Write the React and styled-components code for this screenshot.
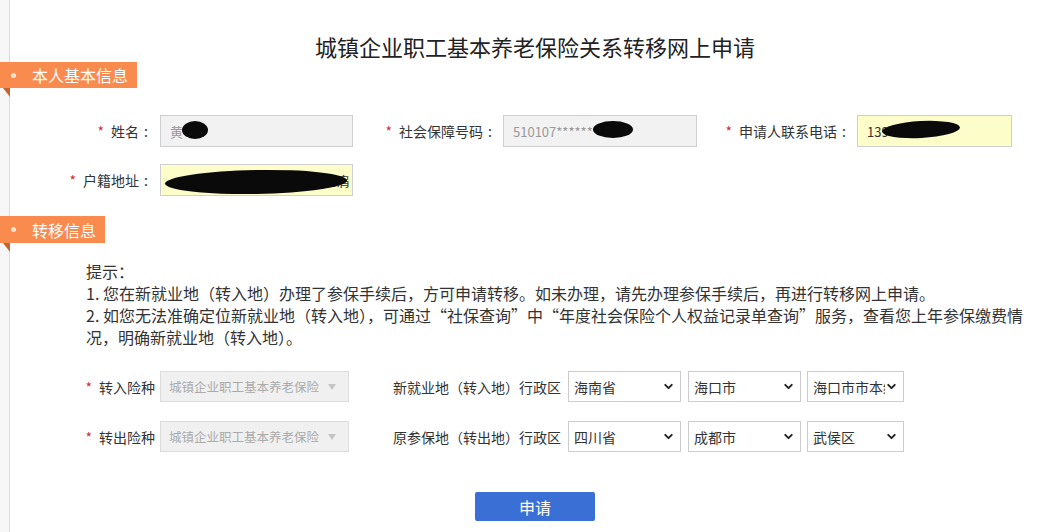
import React from 'react';
import styled, { createGlobalStyle } from 'styled-components';
import { ChevronDown } from 'lucide-react';

const Global = createGlobalStyle`
  html, body {
    margin: 0;
    padding: 0;
    background: #f7f7f7;
    font-family: "Microsoft YaHei", "Noto Sans CJK SC", "Noto Sans", sans-serif;
    color: #333;
  }
`;

const Page = styled.div`
  display: flow-root;
  margin-left: 9px;
  border-left: 1px solid #dadada;
  background: #fff;
  min-height: 532px;
`;

const Title = styled.h1`
  margin: 0;
  padding: 31px 0 0 7px;
  height: 30px;
  line-height: 30px;
  font-size: 22px;
  font-weight: normal;
  color: #222;
  text-align: center;
`;

const Tab = styled.div`
  position: relative;
  display: flex;
  align-items: center;
  width: fit-content;
  height: ${p => p.$h}px;
  margin: ${p => p.$top}px 0 0 -10px;
  padding: 0 9px 0 32px;
  background: #f98b4f;
  color: #fff;
  font-size: 16px;

  &::before {
    content: '';
    position: absolute;
    left: 11px;
    top: 50%;
    width: 5px;
    height: 5px;
    margin-top: -2.5px;
    border-radius: 50%;
    background: #fde4d3;
  }

  &::after {
    content: '';
    position: absolute;
    left: 3px;
    top: 100%;
    border-top: 9px solid #c4652f;
    border-left: 7px solid transparent;
  }
`;

const Row = styled.div`
  display: flex;
  align-items: center;
  height: ${p => p.$h}px;
  margin-top: ${p => p.$top}px;
`;

const Label = styled.div`
  flex: none;
  display: flex;
  align-items: center;
  justify-content: ${p => (p.$align === 'left' ? 'flex-start' : 'flex-end')};
  width: ${p => p.$w}px;
  margin-right: ${p => p.$gap}px;
  margin-left: ${p => p.$left || 0}px;
  font-size: 14px;
  color: #333;
  white-space: nowrap;
`;

const Star = styled.span`
  color: #c8323a;
  margin-right: 7px;
`;

const Colon = styled.span`
  display: inline-block;
  width: 14px;
  text-align: center;
`;

const Input = styled.div`
  position: relative;
  box-sizing: border-box;
  flex: none;
  width: ${p => p.$w}px;
  height: 32px;
  display: flex;
  align-items: center;
  justify-content: ${p => (p.$end ? 'flex-end' : 'flex-start')};
  padding: 0 2px 0 9px;
  border: 1px solid #cfcfcf;
  background: ${p => (p.$fill ? '#fdfdc9' : '#f2f2f2')};
  color: ${p => (p.$fill ? '#333' : '#999')};
  font-size: 13px;
  white-space: nowrap;
  overflow: hidden;
`;

const Blot = styled.span`
  position: absolute;
  left: ${p => p.$x}px;
  top: ${p => p.$y}px;
  width: ${p => p.$w}px;
  height: ${p => p.$h}px;
  background: #0a0a0a;
  border-radius: 50%;
  transform: rotate(${p => p.$r || 0}deg);
`;

const Hint = styled.div`
  margin: 17px 0 0 76px;
  width: 950px;
  font-size: 16px;
  line-height: 22px;
  color: #333;
`;

const Select = styled.div`
  box-sizing: border-box;
  flex: none;
  width: ${p => p.$w}px;
  height: 31px;
  margin-right: ${p => p.$gap || 0}px;
  display: flex;
  align-items: center;
  justify-content: space-between;
  padding: 0 ${p => (p.$disabled ? 12 : 5)}px 0 ${p => (p.$disabled ? 8 : 5)}px;
  border: 1px solid ${p => (p.$disabled ? '#dcdcdc' : '#cccccc')};
  background: ${p => (p.$disabled ? '#f0f0f0' : '#fff')};
  color: ${p => (p.$disabled ? '#aaa' : '#333')};
  font-size: ${p => (p.$disabled ? 12.5 : 14)}px;
  white-space: nowrap;

  span {
    min-width: 0;
    overflow: hidden;
  }
  svg {
    flex: none;
  }
`;

const Caret = styled.i`
  flex: none;
  width: 0;
  height: 0;
  border-top: 6px solid #c4c4c4;
  border-left: 4.5px solid transparent;
  border-right: 4.5px solid transparent;
`;

const Actions = styled.div`
  display: flex;
  justify-content: center;
  padding-left: 7px;
  margin-top: 40px;
`;

const Button = styled.button`
  width: 120px;
  height: 29px;
  border: none;
  border-radius: 2px;
  background: #3a6fd6;
  color: #fff;
  font-family: inherit;
  font-size: 16px;
  cursor: pointer;
`;

const Drop = ({ w, gap, children }) => (
  <Select $w={w} $gap={gap}>
    <span>{children}</span>
    <ChevronDown size={13} strokeWidth={3.6} color="#222" />
  </Select>
);

const Req = ({ children, ...rest }) => (
  <Label {...rest}>
    <Star>*</Star>
    {children}
    <Colon>:</Colon>
  </Label>
);

export default function App() {
  return (
    <Page>
      <Global />
      <Title>城镇企业职工基本养老保险关系转移网上申请</Title>

      <Tab $h={26} $top={1}>本人基本信息</Tab>

      <Row $h={32} $top={27}>
        <Req $w={143} $gap={7}>姓名</Req>
        <Input $w={193}>
          黄
          <Blot $x={21} $y={5} $w={26} $h={18} />
        </Input>
        <Req $w={144} $gap={6}>社会保障号码</Req>
        <Input $w={194}>
          510107*******
          <Blot $x={89} $y={5} $w={40} $h={17} />
        </Input>
        <Req $w={154} $gap={6}>申请人联系电话</Req>
        <Input $w={155} $fill>
          139
          <Blot $x={24} $y={5} $w={78} $h={17} $r={-3} />
        </Input>
      </Row>

      <Row $h={32} $top={17}>
        <Req $w={143} $gap={7}>户籍地址</Req>
        <Input $w={193} $fill $end>
          肩
          <Blot $x={4} $y={5} $w={182} $h={24} $r={-1} />
        </Input>
      </Row>

      <Tab $h={27} $top={20}>转移信息</Tab>

      <Hint>
        提示：<br />
        1. 您在新就业地（转入地）办理了参保手续后，方可申请转移。如未办理，请先办理参保手续后，再进行转移网上申请。<br />
        2. 如您无法准确定位新就业地（转入地），可通过“社保查询”中“年度社会保险个人权益记录单查询”服务，查看您上年参保缴费情<br />
        况，明确新就业地（转入地）。
      </Hint>

      <Row $h={31} $top={23}>
        <Label $w={145} $gap={5}><Star>*</Star>转入险种</Label>
        <Select $w={189} $disabled>
          <span>城镇企业职工基本养老保险</span>
          <Caret />
        </Select>
        <Label $w={169} $gap={6} $left={44} $align="left">新就业地（转入地）行政区</Label>
        <Drop w={113} gap={7}>海南省</Drop>
        <Drop w={113} gap={6}>海口市</Drop>
        <Drop w={97}>海口市市本级</Drop>
      </Row>

      <Row $h={31} $top={19}>
        <Label $w={145} $gap={5}><Star>*</Star>转出险种</Label>
        <Select $w={189} $disabled>
          <span>城镇企业职工基本养老保险</span>
          <Caret />
        </Select>
        <Label $w={169} $gap={6} $left={44} $align="left">原参保地（转出地）行政区</Label>
        <Drop w={113} gap={7}>四川省</Drop>
        <Drop w={113} gap={6}>成都市</Drop>
        <Drop w={97}>武侯区</Drop>
      </Row>

      <Actions>
        <Button>申请</Button>
      </Actions>
    </Page>
  );
}
